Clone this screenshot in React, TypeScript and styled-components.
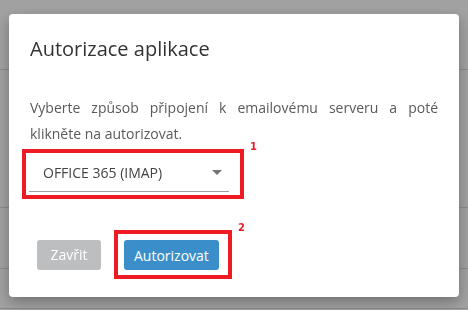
import React from 'react';
import styled, { createGlobalStyle } from 'styled-components';

const GlobalStyle = createGlobalStyle`
  html, body {
    margin: 0;
    padding: 0;
    width: 468px;
    height: 310px;
    overflow: hidden;
    background: #ffffff;
    font-family: "Open Sans", "Liberation Sans", sans-serif;
  }
  * { box-sizing: border-box; }
`;

const rows = [69, 137, 60, 39];

const App = () => {
  return (
    <>
      <GlobalStyle />
      <Page>
        {rows.map((h, i) => (
          <PageRow key={i} $height={h} />
        ))}
      </Page>
      <Backdrop>
        <Dialog>
          <Title>Autorizace aplikace</Title>
          <Message>
            Vyberte způsob připojení k emailovému serveru a poté klikněte na autorizovat.
          </Message>
          <SelectMark>
            <Select>
              <SelectValue>OFFICE 365 (IMAP)</SelectValue>
              <Caret />
            </Select>
            <MarkNumber>1</MarkNumber>
          </SelectMark>
          <Actions>
            <Button $variant="muted">Zavřit</Button>
            <ButtonMark>
              <Button $variant="primary">Autorizovat</Button>
              <MarkNumber>2</MarkNumber>
            </ButtonMark>
          </Actions>
        </Dialog>
      </Backdrop>
    </>
  );
};

const Page = styled.div`
  display: flex;
  flex-direction: column;
  width: 468px;
  height: 310px;
`;

const PageRow = styled.div<{ $height: number }>`
  flex: 0 0 ${p => p.$height + 1}px;
  border-bottom: 1px solid #dcdcdc;
`;

const Backdrop = styled.div`
  position: fixed;
  inset: 0;
  background: rgba(0, 0, 0, 0.37);
`;

const Dialog = styled.div`
  position: absolute;
  left: 9px;
  top: 14px;
  width: 450px;
  padding: 21px 21px 18px;
  background: #ffffff;
  border-radius: 4px;
  box-shadow: 0 5px 14px rgba(0, 0, 0, 0.3);
  display: flex;
  flex-direction: column;
  align-items: flex-start;
`;

const Title = styled.h2`
  margin: 0 0 32px;
  font-size: 20px;
  line-height: 28px;
  font-weight: 400;
  color: #333333;
`;

const Message = styled.p`
  margin: 0 0 2px;
  width: 408px;
  font-size: 14px;
  line-height: 26px;
  color: #5a5a5a;
  text-align: justify;
`;

const Mark = styled.div`
  position: relative;
  display: inline-flex;
  border: 4px solid #ed1c24;
`;

const SelectMark = styled(Mark)`
  margin-left: -8px;
  padding: 0 11px 3px 3px;
`;

const ButtonMark = styled(Mark)`
  padding: 6px 9px 5px 6px;
`;

const MarkNumber = styled.span`
  position: absolute;
  right: -17px;
  top: -11px;
  font-family: "DejaVu Sans", Verdana, sans-serif;
  font-size: 10px;
  font-weight: 700;
  line-height: 10px;
  color: #e8202a;
`;

const Select = styled.div`
  width: 200px;
  height: 39px;
  display: flex;
  align-items: center;
  justify-content: space-between;
  padding: 0 7px 0 14px;
  border-bottom: 1px solid #9e9e9e;
`;

const SelectValue = styled.span`
  font-size: 14px;
  color: #444444;
`;

const Caret = styled.span`
  width: 0;
  height: 0;
  border-left: 5px solid transparent;
  border-right: 5px solid transparent;
  border-top: 5px solid #757575;
`;

const Actions = styled.div`
  margin-top: 31px;
  padding-left: 7px;
  display: flex;
  align-items: center;
  gap: 13px;
`;

const Button = styled.button<{ $variant: 'muted' | 'primary' }>`
  min-width: 64px;
  height: 30px;
  padding: 0 10px;
  border: none;
  border-radius: 3px;
  font-family: "Open Sans", "Liberation Sans", sans-serif;
  font-size: 14px;
  color: #ffffff;
  background: ${p => (p.$variant === 'primary' ? '#3a8fcb' : '#bdbec0')};
  cursor: pointer;
`;

export default App;
